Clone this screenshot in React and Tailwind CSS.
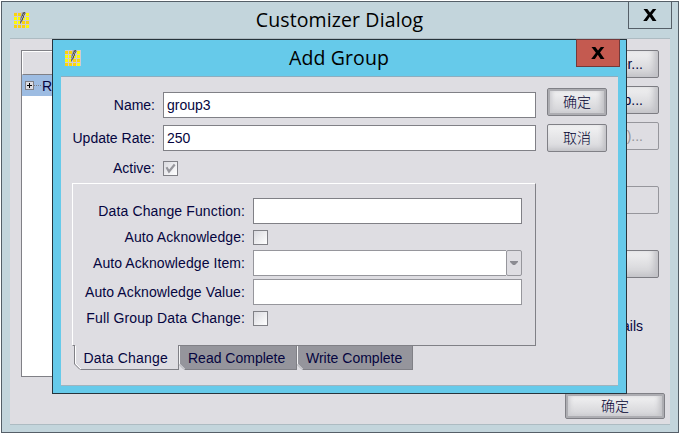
import React from "react";

const PENCIL = [
  [7, 0, "#c4c4bc"], [8, 0, "#aaa"], [9, 0, "#777"], [10, 0, "#555"], [11, 0, "#b5b5ad"],
  [7, 1, "#bbb"], [8, 1, "#888"], [9, 1, "#555"], [10, 1, "#777"], [11, 1, "#999"],
  [7, 2, "#b5b5ad"], [8, 2, "#666"], [9, 2, "#999"], [10, 2, "#666"],
  [7, 3, "#999"], [8, 3, "#555"], [9, 3, "#777"], [10, 3, "#b5b5b5"],
  [6, 4, "#bbb"], [7, 4, "#777"], [8, 4, "#aaa"], [9, 4, "#555"],
  [6, 5, "#aaa"], [7, 5, "#777"], [8, 5, "#999"], [9, 5, "#666"],
  [6, 6, "#999"], [7, 6, "#aaa"], [8, 6, "#555"], [9, 6, "#bbb"],
  [6, 7, "#888"], [7, 7, "#999"], [8, 7, "#555"],
  [6, 8, "#aaa"], [7, 8, "#666"], [8, 8, "#999"],
  [6, 9, "#777"], [7, 9, "#777"],
  [6, 10, "#666"], [7, 10, "#bbb"], [6, 11, "#999"],
];

const GOLD = ["0-0", "1-0", "3-2", "2-2", "0-3", "1-3", "2-3"];

function GridIcon() {
  return (
    <svg width="16" height="16" viewBox="0 0 16 16" shapeRendering="crispEdges" className="shrink-0">
      <rect width="16" height="16" fill="#cfccd2" />
      {[0, 1, 2, 3].map((c) =>
        [0, 1, 2, 3].map((r) => (
          <rect key={`${c}-${r}`} x={c * 4} y={r * 4 + 1} width="3" height="3" fill={GOLD.includes(`${c}-${r}`) ? "#fbd40c" : "#fdfb05"} />
        ))
      )}
      {PENCIL.map(([x, y, fill]) => (
        <rect key={`p${x}-${y}`} x={x} y={y} width="1" height="1" fill={fill} />
      ))}
    </svg>
  );
}

function CloseGlyph() {
  return (
    <svg width="14" height="12" viewBox="0 0 14 12" fill="#000">
      <path d="M0.5 0H4.3L7 3.6L9.8 0H13.3L9 5.6L13.5 12H9.6L6.8 7.8L3.9 12H0.2L4.9 5.8Z" />
    </svg>
  );
}

function TitleBar({ title, close }) {
  return (
    <div className="flex h-9 items-start">
      <div className="flex w-[50px] shrink-0 pt-[10px] pl-3">
        <GridIcon />
      </div>
      <div className="flex-1 pt-[4px] pr-px text-center font-['Open_Sans','Noto_Sans',sans-serif] text-[19.5px] leading-[28px] tracking-[0.12px] text-black whitespace-nowrap">
        {title}
      </div>
      <div className="flex w-[50px] shrink-0 justify-end pr-[6px]">
        <button className={`-mt-px flex h-7 w-11 shrink-0 items-center justify-center border ${close}`}>
          <CloseGlyph />
        </button>
      </div>
    </div>
  );
}

function Button({ children, className = "", strong = false }) {
  return (
    <button
      className={`flex shrink-0 items-center justify-center rounded-[2px] border pb-[2px] font-['Noto_Sans_CJK_SC',sans-serif] text-[14px] leading-none font-light text-[#000030] ${
        strong
          ? "border-[#808086] bg-linear-to-b from-[#f4f4f5] to-[#d0d0d4] shadow-[inset_0_0_0_2px_#adadb2,inset_3px_0_4px_1px_#cdcdd1,inset_-5px_-1px_5px_0_#c2c2c6]"
          : "border-[#808086] bg-linear-to-b from-[#f3f3f4] to-[#d6d6da] shadow-[inset_-3px_-2px_5px_0_#c0c0c5]"
      } ${className}`}
    >
      {children}
    </button>
  );
}

function SideButton({ children, className = "", disabled = false }) {
  return (
    <button
      className={`h-7 w-[110px] shrink-0 rounded-[2px] border pr-[15px] text-right text-[14px] leading-[26px] ${
        disabled
          ? "border-[#96969c] text-[#96969c]"
          : "border-[#7c7c82] bg-linear-to-b from-[#f1f1f2] to-[#cfcfd3] shadow-[inset_-4px_-2px_6px_0_#c0c0c5]"
      } ${className}`}
    >
      {children}
    </button>
  );
}

function Check({ checked = false }) {
  return (
    <span className="flex h-[15px] w-[15px] border border-[#808086] bg-linear-to-br from-[#dadadf] to-white">
      {checked && (
        <svg width="13" height="13" viewBox="0 0 13 13" fill="none" stroke="#96969c" strokeWidth="2.2">
          <path d="M2.5 5.2L5 9.5L10.7 2.5" />
        </svg>
      )}
    </span>
  );
}

function Row({ label, className, labelClass, children }) {
  return (
    <div className={`flex shrink-0 items-center ${className}`}>
      <span className={`mr-2 shrink-0 text-right leading-[15px] whitespace-nowrap ${labelClass}`}>{label}</span>
      {children}
    </div>
  );
}

function ActiveTab({ children }) {
  return (
    <div className="relative h-[25px] w-[104px] shrink-0 border-b border-[#808086] bg-[#dedde2] whitespace-nowrap">
      <span className="block pl-[9.5px] leading-[26px] tracking-[0.17px]">{children}</span>
      <svg width="8" height="25" viewBox="0 0 8 25" className="absolute top-0 left-0" fill="none">
        <path d="M0 18.5L0 25H7Z" fill="#dedde2" />
        <path d="M0.5 0V19L6 24.5" stroke="#808086" />
        <path d="M1.5 1V18.5L7 24" stroke="#fff" />
      </svg>
    </div>
  );
}

function Tab({ children, className, first = false }) {
  return (
    <div className={`relative h-[25px] shrink-0 border-y border-r border-[#808086] bg-[#95959c] whitespace-nowrap ${className}`}>
      <span className="block leading-[24px]">{children}</span>
      <svg width="9" height="25" viewBox={first ? "-1 0 9 25" : "0 0 9 25"} className="absolute -top-px left-0" fill="none">
        <path d="M-1 18.5V25H6L0 19Z" fill="#dedde2" />
        {first && <path d="M-0.5 0V25" stroke="#808086" />}
        <path d="M0.5 1V19L5.5 24" stroke="#f4f4f6" />
        <path d="M0 19.5L5 24.5" stroke="#a4a4aa" strokeWidth="0.7" />
      </svg>
    </div>
  );
}

function AddGroupDialog() {
  return (
    <div className="absolute top-[39px] left-[52px] flex h-[355px] w-[575px] flex-col border border-[#26343c] bg-[#66caea]">
      <TitleBar title="Add Group" close="border-[#73393a] bg-[#c45a50]" />
      <div className="mx-2 flex h-[310px] border-y border-t-[#8caec0] border-b-[#9fb4bf] bg-[#dedde2]">
        <div className="flex w-[475px] shrink-0 flex-col pt-[15px]">
          <Row label="Name:" className="h-[26px]" labelClass="w-[94px]">
            <input readOnly value="group3" className="h-[26px] w-[373px] border border-[#808086] bg-white pl-[3px]" />
          </Row>
          <Row label="Update Rate:" className="mt-[7px] h-[26px]" labelClass="w-[94px]">
            <input readOnly value="250" className="h-[26px] w-[373px] border border-[#808086] bg-white pl-[3px]" />
          </Row>
          <Row label="Active:" className="mt-[10px] h-[15px]" labelClass="w-[94px]">
            <Check checked />
          </Row>
          <div className="mt-[7px] ml-[11px] flex h-[163px] w-[464px] shrink-0 flex-col border border-t-white border-r-[#808086] border-b-[#808086] border-l-white pt-[14px]">
            <Row label="Data Change Function:" className="h-[26px]" labelClass="w-[172px] tracking-[0.13px]">
              <input readOnly className="h-[26px] w-[269px] border border-[#808086] bg-white" />
            </Row>
            <Row label="Auto Acknowledge:" className="mt-[6px] h-[15px]" labelClass="w-[172px] tracking-[0.08px]">
              <Check />
            </Row>
            <Row label="Auto Acknowledge Item:" className="mt-[5px] h-[26px]" labelClass="w-[172px] tracking-[0.08px]">
              <div className="flex h-[26px] w-[269px]">
                <span className="flex-1 border border-r-0 border-[#96969c] bg-white" />
                <span className="flex w-4 items-center justify-center rounded-[2px] border border-[#96969c]">
                  <svg width="8" height="4" viewBox="0 0 8 4" fill="#8b8b92">
                    <path d="M0 0H8V1L5 4H3L0 1Z" />
                  </svg>
                </span>
              </div>
            </Row>
            <Row label="Auto Acknowledge Value:" className="mt-[3px] h-[26px]" labelClass="w-[172px] tracking-[0.1px]">
              <input readOnly className="h-[26px] w-[269px] border border-[#96969c] bg-white" />
            </Row>
            <Row label="Full Group Data Change:" className="mt-[6px] h-[15px]" labelClass="w-[172px] tracking-[0.13px]">
              <Check />
            </Row>
          </div>
          <div className="z-10 -mt-px ml-[13px] flex">
            <ActiveTab>Data Change</ActiveTab>
            <Tab first className="w-[119px] pl-[10px]">Read Complete</Tab>
            <Tab className="w-[116px] pl-[9px]">Write Complete</Tab>
          </div>
        </div>
        <div className="ml-[11px] flex flex-col gap-2 pt-[11px]">
          <Button strong className="h-7 w-[60px]">确定</Button>
          <Button className="h-7 w-[60px]">取消</Button>
        </div>
      </div>
    </div>
  );
}

export default function App() {
  return (
    <div className="relative h-[435px] w-[679px] overflow-hidden bg-white pt-px pl-px font-['Liberation_Sans',Arial,sans-serif] text-[14px] leading-4 text-[#050540]">
      <div className="flex h-[432px] w-[678px] flex-col border border-[#555f68] bg-[#c3d5dc]">
        <TitleBar title="Customizer Dialog" close="border-[#555f68] bg-[#c3d5dc]" />
        <div className="mx-2 flex h-[387px] flex-col border-y border-[#adbbc2] bg-[#dedde2]">
          <div className="flex h-[338px] shrink-0 justify-between pr-[11px] pl-[11px]">
            <div className="mt-[11px] flex h-[327px] w-[300px] flex-col border border-[#808086] bg-white">
              <div className="h-6 shrink-0 border-t border-l border-b border-t-white border-b-[#808086] border-l-white bg-[#dedde2]" />
              <div className="flex h-[21px] items-center bg-[#9dbce2] pl-[3px]">
                <svg width="16" height="9" viewBox="0 0 16 9" shapeRendering="crispEdges">
                  <rect x="0.5" y="0.5" width="8" height="8" fill="#dedde2" stroke="#808086" />
                  <path d="M2 4.5H7M4.5 2V7" stroke="#000" />
                  <path d="M9 4.5H16" stroke="#808086" strokeDasharray="1 1" />
                </svg>
                <span className="pl-px">Root</span>
              </div>
            </div>
            <div className="flex flex-col items-end pt-[11px]">
              <SideButton>Server...</SideButton>
              <SideButton className="mt-2">Group...</SideButton>
              <SideButton disabled className="mt-2">Item(s)...</SideButton>
              <SideButton disabled className="mt-9" />
              <SideButton className="mt-9" />
              <span className="mt-10 pr-4">Details</span>
            </div>
          </div>
          <div className="mt-4 flex justify-end pr-[5px]">
            <Button strong className="h-[26px] w-[100px]">确定</Button>
          </div>
        </div>
      </div>
      <AddGroupDialog />
    </div>
  );
}
